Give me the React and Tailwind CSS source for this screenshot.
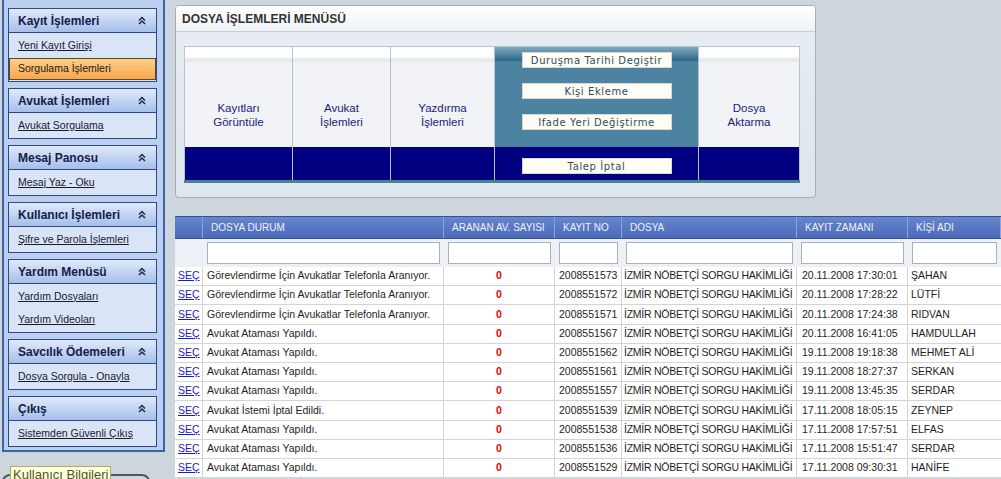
const sidebar = [
  { title: 'Kayıt İşlemleri', items: ['Yeni Kayıt Girişi', 'Sorgulama İşlemleri'], active: 1 },
  { title: 'Avukat İşlemleri', items: ['Avukat Sorgulama'] },
  { title: 'Mesaj Panosu', items: ['Mesaj Yaz - Oku'] },
  { title: 'Kullanıcı İşlemleri', items: ['Şifre ve Parola İşlemleri'] },
  { title: 'Yardım Menüsü', items: ['Yardım Dosyaları', 'Yardım Videoları'] },
  { title: 'Savcılık Ödemeleri', items: ['Dosya Sorgula - Onayla'] },
  { title: 'Çıkış', items: ['Sistemden Güvenli Çıkış'] },
];

const ATANDI = 'Avukat Ataması Yapıldı.';
const ARANIYOR = 'Görevlendirme İçin Avukatlar Telefonla Aranıyor.';

const rows = [
  [ARANIYOR, '2008551573', '20.11.2008 17:30:01', 'ŞAHAN'],
  [ARANIYOR, '2008551572', '20.11.2008 17:28:22', 'LÜTFİ'],
  [ARANIYOR, '2008551571', '20.11.2008 17:24:38', 'RIDVAN'],
  [ATANDI, '2008551567', '20.11.2008 16:41:05', 'HAMDULLAH'],
  [ATANDI, '2008551562', '19.11.2008 19:18:38', 'MEHMET ALİ'],
  [ATANDI, '2008551561', '19.11.2008 18:27:37', 'SERKAN'],
  [ATANDI, '2008551557', '19.11.2008 13:45:35', 'SERDAR'],
  ['Avukat İstemi İptal Edildi.', '2008551539', '17.11.2008 18:05:15', 'ZEYNEP'],
  [ATANDI, '2008551538', '17.11.2008 17:57:51', 'ELFAS'],
  [ATANDI, '2008551536', '17.11.2008 15:51:47', 'SERDAR'],
  [ATANDI, '2008551529', '17.11.2008 09:30:31', 'HANİFE'],
];

const GRID = 'grid grid-cols-[28px_241px_111px_67px_175px_111px_93px]';

function Chevrons() {
  return (
    <svg width="8" height="9" viewBox="0 0 8 9" fill="none">
      <path d="M1 4.5L4 1.5L7 4.5" stroke="#1d2850" strokeWidth="1.5" />
      <path d="M1 8L4 5L7 8" stroke="#1d2850" strokeWidth="1.5" />
    </svg>
  );
}

function Panel({ title, items, active }) {
  return (
    <div className="border border-[#2b4a8a] bg-[#d9e5f6]">
      <div className="h-[24px] flex items-center justify-between pl-[9px] pr-[10px] border-b border-[#2b4a8a] bg-linear-to-b from-[#e0eaf9] to-[#a6bfe9]">
        <span className="text-[12px] font-bold text-[#15204a]">{title}</span>
        <Chevrons />
      </div>
      <div className="py-[1px]">
        {items.map((item, i) =>
          i === active ? (
            <div key={item} className="h-[23px] flex items-center">
              <div className="w-full h-[22px] flex items-center pl-[8px] border border-[#5a4a2c] bg-linear-to-b from-[#fdcf8a] to-[#f8a64a] text-[10.5px] text-[#1a1a1a]">
                {item}
              </div>
            </div>
          ) : (
            <div key={item} className="h-[23px] flex items-center pl-[9px] text-[10.5px] text-[#1a1a2e] underline">
              {item}
            </div>
          )
        )}
      </div>
    </div>
  );
}

function MenuButton({ children }) {
  return (
    <div className="w-[150px] h-[16px] flex items-center justify-center bg-[#fffdf5] border border-[#d8d8d0] font-['DejaVu_Sans',sans-serif] text-[10px] tracking-[0.6px] text-[#2d4d5d]">
      {children}
    </div>
  );
}

function MenuCell({ lines, className }) {
  return (
    <div className={`flex flex-col ${className}`}>
      <div className="h-[100px] bg-[linear-gradient(to_bottom,#ffffff_0px,#ffffff_9px,#e2e6eb_13px,#f1f3f6_16px,#f1f3f6_100%)] flex flex-col items-center pt-[54px] text-[11.5px] leading-[14px] text-[#1c1c78] text-center">
        {lines.map((l) => (
          <span key={l}>{l}</span>
        ))}
      </div>
      <div className="h-[33px] bg-[#000080]" />
    </div>
  );
}

export default function App() {
  return (
    <div className="w-[1001px] h-[479px] overflow-hidden bg-[#cdd6dc] flex font-['Liberation_Sans',Arial,sans-serif]">
      {/* Left navigation */}
      <div className="w-[175px] shrink-0 pl-[2px]">
        <div className="w-[163px] border-l-2 border-r-2 border-b-2 border-[#3f62ac] bg-[#bccfee] pl-[4px] pr-[6px] pt-[8px] pb-[3px] flex flex-col gap-[6px]">
          {sidebar.map((p) => (
            <Panel key={p.title} {...p} />
          ))}
        </div>
        <fieldset className="mt-[14px] w-[148px] h-[60px] border-2 border-[#4b5a61] rounded-[8px] pl-[6px]">
          <legend className="bg-[#ffffe1] border border-[#b5b04a] px-[2px] text-[13px] leading-[15px] text-[#4f5520]">
            Kullanıcı Bilgileri
          </legend>
        </fieldset>
      </div>

      {/* Main content */}
      <div className="flex-1 pt-[5px] flex flex-col">
        <div className="w-[641px] h-[193px] rounded-[4px] border border-[#9fb1bd] bg-linear-to-b from-[#e8eef2] to-[#dde6ec] overflow-hidden">
          <div className="h-[26px] bg-linear-to-b from-white to-[#eef2f5] border-b border-[#c5d0d8] flex items-center pl-[6px]">
            <span className="font-bold text-[12px] text-[#333333]">DOSYA İŞLEMLERİ MENÜSÜ</span>
          </div>
          <div className="pt-[14px] pl-[8px]">
            <div className="w-[616px]">
              <div className="flex border border-b-0 border-[#b8c4cc]">
                <MenuCell lines={['Kayıtları', 'Görüntüle']} className="w-[108px] border-r border-[#b8c2cc]" />
                <MenuCell lines={['Avukat', 'İşlemleri']} className="w-[98px] border-r border-[#b8c2cc]" />
                <MenuCell lines={['Yazdırma', 'İşlemleri']} className="w-[104px] border-r border-[#b8c2cc]" />
                <div className="w-[204px] border-r border-[#b8c2cc] flex flex-col">
                  <div className="h-[100px] bg-[linear-gradient(to_bottom,#7fa9c1_0px,#2f6a8a_13px,#4c83a0_15px,#4c83a0_100%)] flex flex-col items-center pt-[5px] gap-[15px]">
                    <MenuButton>Duruşma Tarihi Degiştir</MenuButton>
                    <MenuButton>Kişi Ekleme</MenuButton>
                    <MenuButton>Ifade Yeri Değiştirme</MenuButton>
                  </div>
                  <div className="h-[33px] bg-[#000080] flex justify-center pt-[11px]">
                    <MenuButton>Talep İptal</MenuButton>
                  </div>
                </div>
                <MenuCell lines={['Dosya', 'Aktarma']} className="w-[100px]" />
              </div>
              <div className="h-[3px] bg-[#4d7f98]" />
            </div>
          </div>
        </div>

        {/* Records table */}
        <div className="mt-[18px] w-[826px]">
          <div className={`${GRID} h-[23px] border-t border-b border-[#34519a] bg-linear-to-b from-[#6886cd] to-[#4b69b8] text-[10px] text-[#eef2fb]`}>
            {['', 'DOSYA DURUM', 'ARANAN AV. SAYISI', 'KAYIT NO', 'DOSYA', 'KAYIT ZAMANI', 'KİŞİ ADI'].map((h, i) => (
              <div key={i} className="flex items-center pl-[8px] border-r border-[#8ea3d9] whitespace-nowrap overflow-hidden">
                {h}
              </div>
            ))}
          </div>
          <div className={`${GRID} h-[28px] bg-[#edf1f6]`}>
            <div />
            {[0, 1, 2, 3, 4, 5].map((i) => (
              <div key={i} className="flex items-center px-[4px]">
                <div className="w-full h-[22px] bg-white border border-[#a9b1b9]" />
              </div>
            ))}
          </div>
          {rows.map((r) => (
            <div key={r[1]} className={`${GRID} h-[19.2px] bg-white border-b border-[#d4d4d4] text-[10.5px] text-[#1e1e1e] whitespace-nowrap`}>
              <div className="flex items-center pl-[3px] border-r border-[#d4d4d4] text-[#1a1acc] underline">SEÇ</div>
              <div className="flex items-center pl-[4px] border-r border-[#d4d4d4] overflow-hidden">{r[0]}</div>
              <div className="flex items-center justify-center border-r border-[#d4d4d4] font-bold text-[#e00000]">0</div>
              <div className="flex items-center pl-[4px] border-r border-[#d4d4d4] overflow-hidden">{r[1]}</div>
              <div className="flex items-center pl-[2px] border-r border-[#d4d4d4] overflow-hidden tracking-[-0.25px]">İZMİR NÖBETÇİ SORGU HAKİMLİĞİ</div>
              <div className="flex items-center pl-[5px] border-r border-[#d4d4d4] overflow-hidden">{r[2]}</div>
              <div className="flex items-center pl-[3px] overflow-hidden">{r[3]}</div>
            </div>
          ))}
        </div>
      </div>
    </div>
  );
}
